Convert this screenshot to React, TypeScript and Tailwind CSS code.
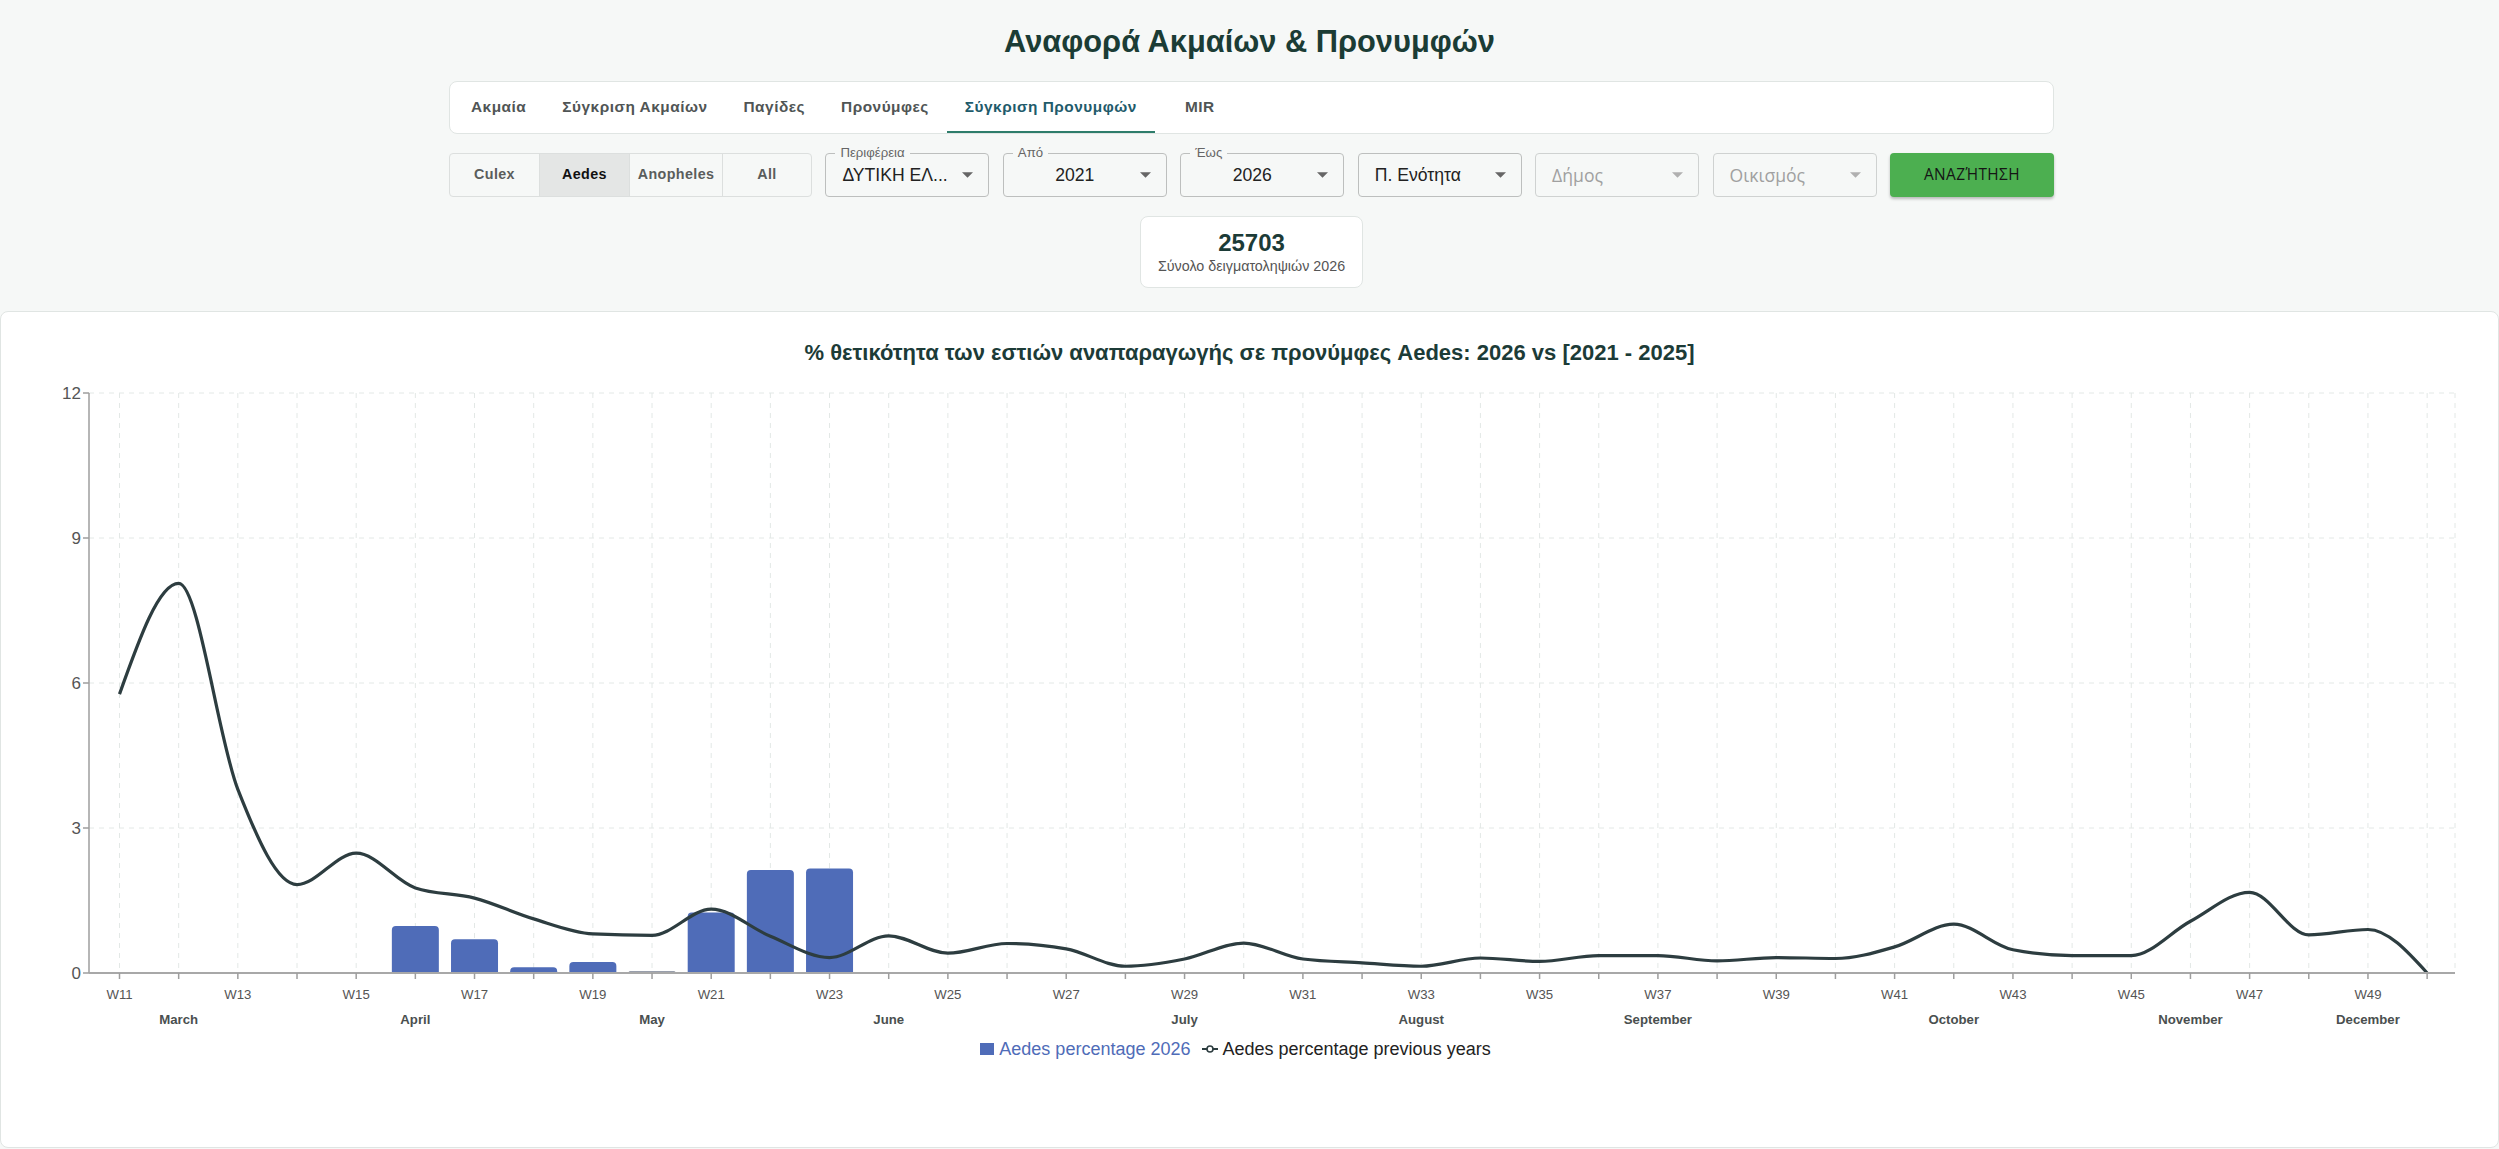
import React from "react"

// weekly data W11..W50
const WEEKS = Array.from({ length: 40 }, (_, i) => 11 + i)
const PREVIOUS = [
  5.77, 8.06, 3.8, 1.83, 2.48, 1.76, 1.55, 1.12, 0.81, 0.78, 1.32, 0.76, 0.32, 0.77, 0.41, 0.61, 0.5, 0.14, 0.29,
  0.62, 0.29, 0.21, 0.14, 0.31, 0.24, 0.36, 0.36, 0.25, 0.32, 0.3, 0.54, 1.01, 0.48, 0.36, 0.36, 1.07, 1.67, 0.79,
  0.9, 0,
]
const CURRENT: Record<number, number> = { 16: 0.97, 17: 0.7, 18: 0.12, 19: 0.23, 20: 0.03, 21: 1.25, 22: 2.13, 23: 2.16 }
const MONTHS: [string, number][] = [
  ["March", 12],
  ["April", 16],
  ["May", 20],
  ["June", 24],
  ["July", 29],
  ["August", 33],
  ["September", 37],
  ["October", 42],
  ["November", 46],
  ["December", 49],
]

// chart geometry (svg coords)
const W = 2497
const H = 662
const AXIS_X = 88
const RIGHT = 2454
const TOP = 26
const BOTTOM = 606
const STEP = 59.17
const xOf = (week: number) => 118.5 + (week - 11) * STEP
const yOf = (v: number) => BOTTOM - (v * (BOTTOM - TOP)) / 12

// d3 style monotoneX curve
function monotonePath(pts: [number, number][]) {
  const n = pts.length
  const s: number[] = []
  for (let i = 0; i < n - 1; i++) s.push((pts[i + 1][1] - pts[i][1]) / (pts[i + 1][0] - pts[i][0]))
  const t: number[] = new Array(n).fill(0)
  for (let i = 1; i < n - 1; i++) {
    const h0 = pts[i][0] - pts[i - 1][0]
    const h1 = pts[i + 1][0] - pts[i][0]
    const p = (s[i - 1] * h1 + s[i] * h0) / (h0 + h1)
    t[i] = (Math.sign(s[i - 1]) + Math.sign(s[i])) * Math.min(Math.abs(s[i - 1]), Math.abs(s[i]), 0.5 * Math.abs(p)) || 0
  }
  t[0] = (3 * s[0] - t[1]) / 2
  t[n - 1] = (3 * s[n - 2] - t[n - 2]) / 2
  let d = `M${pts[0][0]},${pts[0][1]}`
  for (let i = 0; i < n - 1; i++) {
    const [x0, y0] = pts[i]
    const [x1, y1] = pts[i + 1]
    const dx = (x1 - x0) / 3
    d += `C${x0 + dx},${y0 + dx * t[i]},${x1 - dx},${y1 - dx * t[i + 1]},${x1},${y1}`
  }
  return d
}

const TABS = ["Ακμαία", "Σύγκριση Ακμαίων", "Παγίδες", "Προνύμφες", "Σύγκριση Προνυμφών", "MIR"]
const SPECIES: [string, string][] = [
  ["Culex", "w-[89px]"],
  ["Aedes", "w-[90px]"],
  ["Anopheles", "w-[93px]"],
  ["All", "w-[89px]"],
]

function Caret({ muted }: { muted?: boolean }) {
  return (
    <svg width="11" height="6" viewBox="0 0 10 5" className="absolute right-[15px] top-1/2 -translate-y-1/2">
      <path d="M0 0 L10 0 L5 5 Z" fill={muted ? "#b0b0b0" : "#666"} />
    </svg>
  )
}

function Select({
  label,
  value,
  center,
  muted,
}: {
  label?: string
  value: string
  center?: boolean
  muted?: boolean
}) {
  return (
    <div
      className={
        "relative w-[164px] h-[44px] rounded-[4px] border flex items-center pl-[16px] pr-[36px] " +
        (muted ? "border-[#cfd2d1]" : "border-[#bdbfbe]")
      }
    >
      {label && (
        <span className="absolute -top-[9px] left-[9px] px-[5px] bg-[#f6f8f7] text-[13.2px] leading-[16px] text-[#666] font-['Liberation_Sans',sans-serif]">
          {label}
        </span>
      )}
      <span
        className={
          "w-full whitespace-nowrap text-[17.6px] " +
          (center ? "text-center " : "") +
          (muted ? "text-[#a0a0a0] font-['Open_Sans',sans-serif]" : "text-[#222] font-['Liberation_Sans',sans-serif]")
        }
      >
        {value}
      </span>
      <Caret muted={muted} />
    </div>
  )
}

function Chart() {
  const linePts = WEEKS.map((w, i) => [xOf(w), yOf(PREVIOUS[i])] as [number, number])
  return (
    <svg width={W} height={H} viewBox={`0 0 ${W} ${H}`} className="block" fontFamily="'Liberation Sans', Arial, sans-serif">
      {/* grid */}
      {[12, 9, 6, 3].map((v) => (
        <line key={v} x1={AXIS_X} x2={RIGHT} y1={yOf(v)} y2={yOf(v)} stroke="#e3e8e6" strokeDasharray="5 5" />
      ))}
      {WEEKS.map((w) => (
        <line key={w} x1={xOf(w)} x2={xOf(w)} y1={TOP} y2={BOTTOM} stroke="#e3e8e6" strokeDasharray="5 5" />
      ))}
      <line x1={RIGHT} x2={RIGHT} y1={TOP} y2={BOTTOM} stroke="#e3e8e6" strokeDasharray="5 5" />

      {/* bars */}
      {Object.entries(CURRENT).map(([w, v]) => {
        const x = xOf(Number(w)) - 23.5
        const y = yOf(v)
        const h = BOTTOM - y
        const r = Math.min(4, h)
        return (
          <path
            key={w}
            d={`M${x},${BOTTOM} L${x},${y + r} Q${x},${y} ${x + r},${y} L${x + 47 - r},${y} Q${x + 47},${y} ${x + 47},${y + r} L${x + 47},${BOTTOM} Z`}
            fill={v < 0.05 ? "#34405a" : "#4f6cb8"}
          />
        )
      })}

      {/* line */}
      <path d={monotonePath(linePts)} fill="none" stroke="#2d3d40" strokeWidth={3.2} strokeLinejoin="round" />

      {/* axes */}
      <line x1={AXIS_X} x2={AXIS_X} y1={TOP} y2={BOTTOM} stroke="#9e9e9e" strokeWidth={1.5} />
      <line x1={AXIS_X} x2={RIGHT} y1={BOTTOM} y2={BOTTOM} stroke="#a8a8a8" strokeWidth={2} />
      {[12, 9, 6, 3, 0].map((v) => (
        <g key={v}>
          <line x1={AXIS_X - 6} x2={AXIS_X} y1={yOf(v)} y2={yOf(v)} stroke="#9e9e9e" strokeWidth={1.5} />
          <text x={AXIS_X - 8} y={yOf(v) + 6} textAnchor="end" fontSize={17} fill="#555">
            {v}
          </text>
        </g>
      ))}
      {WEEKS.map((w) => (
        <line key={w} x1={xOf(w)} x2={xOf(w)} y1={BOTTOM} y2={BOTTOM + 6} stroke="#9e9e9e" strokeWidth={1.5} />
      ))}
      {WEEKS.filter((w) => w % 2 === 1).map((w) => (
        <text key={w} x={xOf(w)} y={BOTTOM + 26} textAnchor="middle" fontSize={13.2} fill="#555">
          W{w}
        </text>
      ))}
      {MONTHS.map(([m, w]) => (
        <text key={m} x={xOf(w)} y={BOTTOM + 51} textAnchor="middle" fontSize={13.2} fontWeight="bold" fill="#4a4f4f">
          {m}
        </text>
      ))}
    </svg>
  )
}

export default function App() {
  return (
    <div className="min-h-screen bg-[#f6f8f7] pt-[24px] font-['Liberation_Sans',Arial,sans-serif]">
      <h1 className="text-center text-[30.8px] leading-[36px] font-bold text-[#1b3c35]">Αναφορά Ακμαίων &amp; Προνυμφών</h1>

      <div className="mx-auto w-[1605px] translate-x-[2px]">
        {/* tabs */}
        <div className="mt-[21px] h-[53px] rounded-[8px] border border-[#e0e5e3] bg-white flex pl-[3px]">
          {TABS.map((t) => {
            const active = t === "Σύγκριση Προνυμφών"
            return (
              <div
                key={t}
                className={
                  "min-w-[90px] px-[18px] flex items-center justify-center text-[15.4px] font-bold tracking-[0.5px] border-b-2 " +
                  (active ? "text-[#1f5b6b] border-[#2e7d6b]" : "text-[#505555] border-transparent")
                }
              >
                {t}
              </div>
            )
          })}
        </div>

        {/* filters */}
        <div className="mt-[19px] flex items-center justify-between">
          <div className="flex h-[44px] rounded-[4px] border border-[#dcdfde] overflow-hidden">
            {SPECIES.map(([s, w], i) => (
              <div
                key={s}
                className={
                  w +
                  " flex items-center justify-center text-[14.3px] font-bold tracking-[0.4px] " +
                  (i > 0 ? "border-l border-[#dcdfde] " : "") +
                  (s === "Aedes" ? "bg-[#e4e6e5] text-[#111]" : "text-[#5a5d5c]")
                }
              >
                {s}
              </div>
            ))}
          </div>
          <Select label="Περιφέρεια" value="ΔΥΤΙΚΗ ΕΛ..." />
          <Select label="Από" value="2021" center />
          <Select label="Έως" value="2026" center />
          <Select value="Π. Ενότητα" />
          <Select value="Δήμος" muted />
          <Select value="Οικισμός" muted />
          <button className="w-[164px] h-[44px] rounded-[4px] bg-[#4caf50] text-[15.4px] tracking-[0.4px] text-[#151515] font-['Open_Sans',sans-serif] shadow-[0_2px_3px_rgba(0,0,0,0.25)]">
            ΑΝΑΖΉΤΗΣΗ
          </button>
        </div>

        {/* stats */}
        <div className="mt-[19px] mx-auto w-[223px] h-[72px] rounded-[8px] border border-[#e0e5e3] bg-white flex flex-col items-center justify-center">
          <div className="text-[24px] leading-[28px] font-bold text-[#1c3b37]">25703</div>
          <div className="text-[14.3px] leading-[18px] text-[#555]">Σύνολο δειγματοληψιών 2026</div>
        </div>
      </div>

      {/* chart card */}
      <div className="mt-[23px] mb-[3px] rounded-[8px] border border-[#e0e5e3] bg-white pt-[27px] pb-[86px]">
        <h2 className="text-center text-[22px] leading-[28px] font-bold text-[#1c3b37]">
          % θετικότητα των εστιών αναπαραγωγής σε προνύμφες Aedes: 2026 vs [2021 - 2025]
        </h2>
        <Chart />
        <div className="mt-[8px] pr-[28px] flex items-center justify-center gap-[8px] text-[18px] leading-[24px]">
          <div className="flex items-center gap-[5px]">
            <span className="inline-block w-[14px] h-[12px] bg-[#4f6cb8]" />
            <span className="text-[#4f6cb8]">Aedes percentage 2026</span>
          </div>
          <div className="flex items-center gap-[4px] ml-[4px]">
            <svg width="16" height="10" viewBox="0 0 16 10">
              <line x1="0" y1="5" x2="16" y2="5" stroke="#2d3d40" strokeWidth="2" />
              <circle cx="8" cy="5" r="3" fill="#fff" stroke="#2d3d40" strokeWidth="1.6" />
            </svg>
            <span className="text-[#222]">Aedes percentage previous years</span>
          </div>
        </div>
      </div>
    </div>
  )
}
